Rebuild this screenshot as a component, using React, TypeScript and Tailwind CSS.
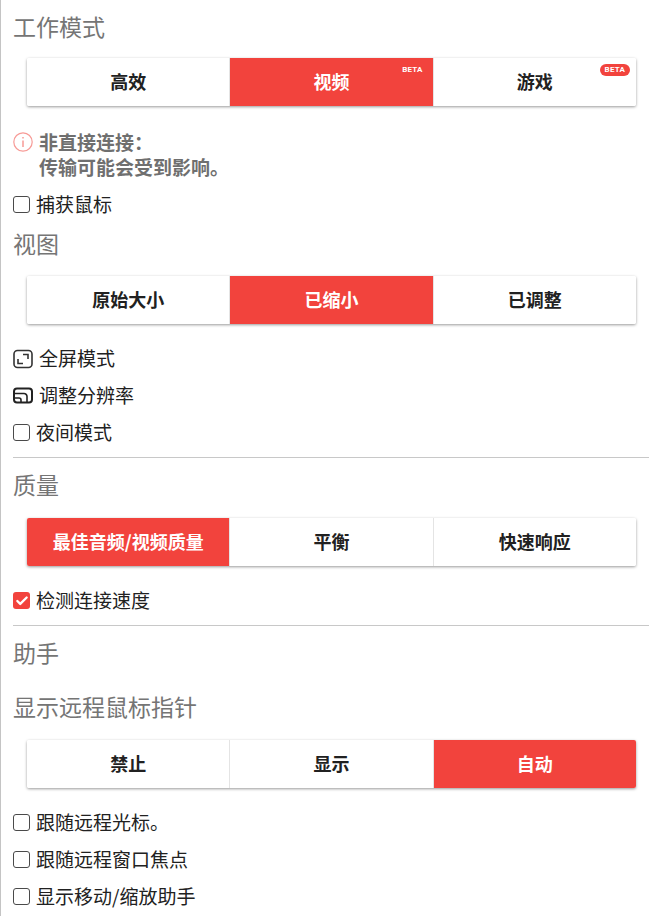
import { Check } from 'lucide-react';

type Option = { label: string; beta?: 'plain' | 'pill' };

function Title({ children, className = '' }: { children: string; className?: string }) {
  return <h2 className={`text-[23px] leading-[30px] font-normal text-[#757575] ${className}`}>{children}</h2>;
}

function Segments({ options, active, className = '' }: { options: Option[]; active: number; className?: string }) {
  return (
    <div className={`ml-[14px] mr-[13px] flex h-12 rounded-[2px] bg-white shadow-[0_1px_3px_rgba(0,0,0,0.4)] ${className}`}>
      {options.map((o, i) => (
        <button
          key={o.label}
          className={`relative flex-1 pb-[2px] text-[18px] font-bold first:rounded-l-[2px] last:rounded-r-[2px] ${
            i === active ? 'bg-[#f2433d] text-white' : 'bg-white text-[#212121]'
          } ${i > 0 ? 'border-l border-[#e4e4e4]' : ''}`}
        >
          {o.label}
          {o.beta === 'plain' && (
            <span className="absolute right-[10px] top-[6px] font-['Roboto',sans-serif] text-[8px] leading-[12px] font-bold tracking-[0.2px] text-white">
              BETA
            </span>
          )}
          {o.beta === 'pill' && (
            <span className="absolute right-[6px] top-[6px] rounded-full bg-[#f2433d] px-[5px] font-['Roboto',sans-serif] text-[8px] leading-[12px] font-bold tracking-[0.2px] text-white">
              BETA
            </span>
          )}
        </button>
      ))}
    </div>
  );
}

function CheckRow({ label, checked = false, className = '' }: { label: string; checked?: boolean; className?: string }) {
  return (
    <label className={`flex h-[37px] items-center gap-[6px] text-[19px] text-[#212121] ${className}`}>
      {checked ? (
        <span className="flex size-[17px] items-center justify-center rounded-[3px] bg-[#f2433d]">
          <Check className="size-[14px] text-white" strokeWidth={4} />
        </span>
      ) : (
        <span className="size-[17px] rounded-[3px] border-[1.5px] border-[#4a4a4a] bg-white" />
      )}
      {label}
    </label>
  );
}

function IconRow({ label, icon }: { label: string; icon: React.ReactNode }) {
  return (
    <div className="flex h-[37px] items-center gap-[6px] text-[19px] text-[#212121]">
      {icon}
      {label}
    </div>
  );
}

export default function App() {
  return (
    <div className="h-[916px] w-[661px] overflow-hidden border-l border-[#c4c4c4] bg-white pl-3 pr-3 font-['Noto_Sans_CJK_SC','Liberation_Sans',sans-serif]">
      <Title className="pt-[11px]">工作模式</Title>
      <Segments
        className="mt-[17px]"
        active={1}
        options={[{ label: '高效' }, { label: '视频', beta: 'plain' }, { label: '游戏', beta: 'pill' }]}
      />

      <div className="mt-[23px] flex gap-[6px] text-[19px] leading-[25px] font-semibold text-[#6f6f6f]">
        <svg viewBox="0 0 20 20" className="mt-[3px] size-5 shrink-0 text-[#f79b97]" fill="none" stroke="currentColor">
          <circle cx="10" cy="10" r="9.2" strokeWidth="1.2" />
          <path d="M10 8.500v6.500M10 5v1.600" strokeWidth="1.5" />
        </svg>
        <div>
          非直接连接：
          <br />
          传输可能会受到影响。
        </div>
      </div>
      <CheckRow label="捕获鼠标" className="mt-[7px]" />

      <Title className="pt-[5px]">视图</Title>
      <Segments
        className="mt-[18px]"
        active={1}
        options={[{ label: '原始大小' }, { label: '已缩小' }, { label: '已调整' }]}
      />
      <div className="mt-[16px]">
        <IconRow
          label="全屏模式"
          icon={
            <svg viewBox="0 0 20 20" className="size-5 shrink-0" fill="none" stroke="#333333" strokeWidth="1.6">
              <rect x="1" y="1.500" width="18" height="17" rx="3.500" />
              <path d="M10 5.500h5v4.500M5 10v4.500h5" />
            </svg>
          }
        />
        <IconRow
          label="调整分辨率"
          icon={
            <svg viewBox="0 0 20 20" className="size-5 shrink-0" fill="none" stroke="#222222" strokeWidth="2">
              <rect x="1" y="2.500" width="18" height="14" rx="3" />
              <path d="M1 7.500h10a3 3 0 0 1 3 3v6M1 12h5a2 2 0 0 1 2 2v2.500" strokeWidth="1.6" />
            </svg>
          }
        />
        <CheckRow label="夜间模式" />
      </div>
      <hr className="mt-[6px] border-[#c8c8c8]" />

      <Title className="pt-[11px]">质量</Title>
      <Segments
        className="mt-[19px]"
        active={0}
        options={[{ label: '最佳音频/视频质量' }, { label: '平衡' }, { label: '快速响应' }]}
      />
      <CheckRow label="检测连接速度" checked className="mt-[16px]" />
      <hr className="mt-[6px] border-[#c8c8c8]" />

      <Title className="pt-[11px]">助手</Title>
      <Title className="pt-[24px]">显示远程鼠标指针</Title>
      <Segments
        className="mt-[19px]"
        active={2}
        options={[{ label: '禁止' }, { label: '显示' }, { label: '自动' }]}
      />
      <div className="mt-[16px]">
        <CheckRow label="跟随远程光标。" />
        <CheckRow label="跟随远程窗口焦点" />
        <CheckRow label="显示移动/缩放助手" />
      </div>
    </div>
  );
}
